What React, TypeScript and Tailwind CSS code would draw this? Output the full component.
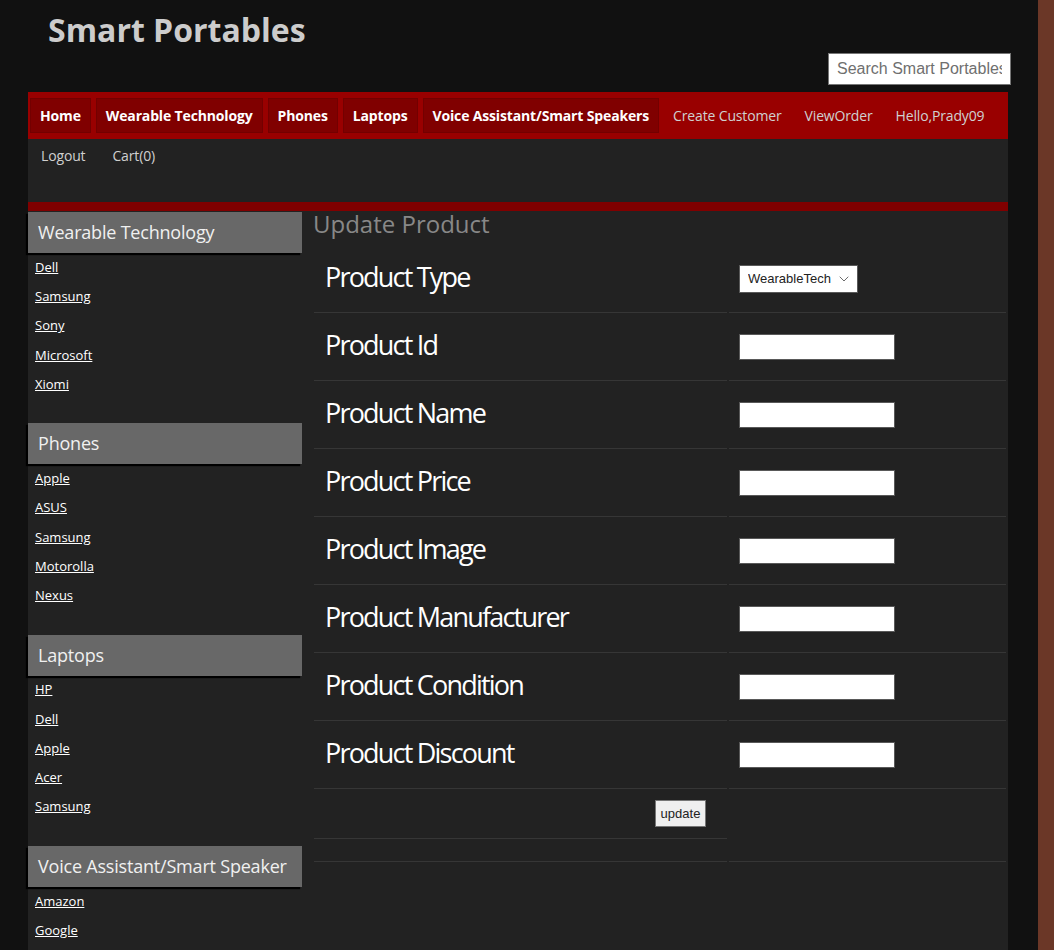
import { ChevronDown } from "lucide-react";

const sections = [
  { title: "Wearable Technology", links: ["Dell", "Samsung", "Sony", "Microsoft", "Xiomi"] },
  { title: "Phones", links: ["Apple", "ASUS", "Samsung", "Motorolla", "Nexus"] },
  { title: "Laptops", links: ["HP", "Dell", "Apple", "Acer", "Samsung"] },
  { title: "Voice Assistant/Smart Speaker", links: ["Amazon", "Google"] },
];

const fields = [
  "Product Id",
  "Product Name",
  "Product Price",
  "Product Image",
  "Product Manufacturer",
  "Product Condition",
  "Product Discount",
];

const font = { fontFamily: "'Open Sans', 'DejaVu Sans', sans-serif" };
const arial = { fontFamily: "'Liberation Sans', Arial, sans-serif" };

export default function App() {
  return (
    <div className="flex h-[950px] overflow-hidden bg-[#6b3727]" style={font}>
      <div className="w-[1038px] shrink-0 bg-[#111111]">
        {/* header */}
        <header className="h-[92px] flex flex-col">
          <h1 className="pl-[48px] pt-[11px] text-[32px] leading-[38px] font-bold text-[#cccccc]">
            Smart Portables
          </h1>
          <div className="flex justify-end pr-[27px] mt-[4px]">
            <input
              placeholder="Search Smart Portables"
              className="w-[183px] h-[32px] bg-white border border-[#767676] px-[8px] text-[16px] text-[#333] placeholder:text-[#6f6f6f] outline-none"
              style={arial}
            />
          </div>
        </header>

        <div className="ml-[28px] mr-[30px] bg-[#222222]">
          {/* nav */}
          <nav className="h-[47px] bg-[#990000] flex items-center gap-[5px] pl-[2px] whitespace-nowrap overflow-hidden">
            {["Home", "Wearable Technology", "Phones", "Laptops", "Voice Assistant/Smart Speakers"].map((t) => (
              <a
                key={t}
                className="shrink-0 h-[35px] px-[9px] flex items-center bg-[#800000] border border-[#730000] text-white font-bold text-[14px] tracking-[-0.15px]"
              >
                {t}
              </a>
            ))}
            {["Create Customer", "ViewOrder", "Hello,Prady09"].map((t) => (
              <a key={t} className="shrink-0 h-[35px] px-[9px] flex items-center text-[#d0d0d0] text-[14px] tracking-[-0.15px]">
                {t}
              </a>
            ))}
          </nav>
          <div className="h-[63px] flex items-start gap-[5px] pl-[2px]">
            {["Logout", "Cart(0)"].map((t) => (
              <a key={t} className="h-[33px] px-[11px] flex items-center text-[#d0d0d0] text-[14px] tracking-[-0.15px]">
                {t}
              </a>
            ))}
          </div>
          <div className="h-[9px] bg-[#800000]" />

          {/* body */}
          <div className="flex pb-[40px]">
            <aside className="w-[274px] pt-[1px]">
              {sections.map((s) => (
                <div key={s.title} className="mb-[24px]">
                  <h2 className="h-[41px] bg-[#686868] flex items-center pl-[10px] text-[18px] tracking-[-0.2px] text-[#f0f0f0] whitespace-nowrap shadow-[-2px_2px_1px_#000]">
                    {s.title}
                  </h2>
                  <ul>
                    {s.links.map((l) => (
                      <li key={l} className="h-[29.25px] flex items-center pl-[7px]">
                        <a className="text-[13px] text-white underline">{l}</a>
                      </li>
                    ))}
                  </ul>
                </div>
              ))}
            </aside>

            <main className="flex-1">
              <h2 className="pl-[11px] text-[24px] leading-[26px] text-[#888888]">Update Product</h2>
              <div className="ml-[12px] mt-[8px] grid grid-cols-[413px_277px] gap-x-[2px]">
                <div className="h-[68px] border-b border-[#363636] flex items-center px-[11px]">
                  <span className="text-[27px] tracking-[-1.8px] leading-[32px] text-white pb-[4px]">Product Type</span>
                </div>
                <div className="h-[68px] border-b border-[#363636] flex items-center px-[10px]">
                  <div className="relative">
                    <select
                      className="appearance-none w-[119px] h-[28px] bg-white border border-[#595959] pl-[8px] text-[13px] text-[#222] outline-none"
                      style={arial}
                      defaultValue="WearableTech"
                    >
                      <option>WearableTech</option>
                      <option>Phones</option>
                      <option>Laptops</option>
                      <option>VoiceAssistant</option>
                    </select>
                    <ChevronDown
                      className="absolute right-[6px] top-[6px] w-[16px] h-[16px] text-[#555] pointer-events-none"
                      strokeWidth={1.3}
                    />
                  </div>
                </div>

                {fields.map((f) => (
                  <div key={f} className="contents">
                    <div className="h-[68px] border-b border-[#363636] flex items-center px-[11px]">
                      <span className="text-[27px] tracking-[-1.8px] leading-[32px] text-white pb-[4px]">{f}</span>
                    </div>
                    <div className="h-[68px] border-b border-[#363636] flex items-center px-[10px]">
                      <input className="w-[156px] h-[26px] bg-white border border-[#595959] outline-none" />
                    </div>
                  </div>
                ))}

                <div className="h-[50px] border-b border-[#363636] flex items-center justify-end pr-[21px]">
                  <button
                    className="w-[51px] h-[27px] bg-[#efefef] border border-[#767676] text-[13px] text-[#222]"
                    style={arial}
                  >
                    update
                  </button>
                </div>
                <div className="row-span-2 border-b border-[#363636]" />
                <div className="h-[23px] border-b border-[#363636]" />
              </div>
            </main>
          </div>
        </div>
      </div>
    </div>
  );
}
